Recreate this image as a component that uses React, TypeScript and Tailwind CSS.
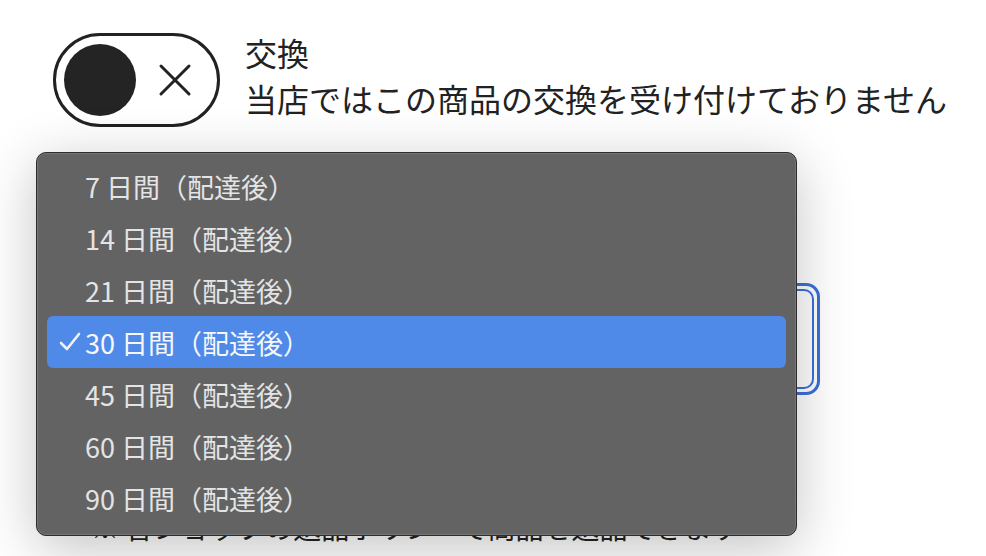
import React from 'react';

const options = [7, 14, 21, 30, 45, 60, 90];
const selected = 30;

function Toggle() {
  return (
    <div className="flex h-[94px] w-[167px] shrink-0 items-center rounded-full border-[3px] border-[#222222] bg-white px-[8px]">
      <div className="h-[72px] w-[72px] rounded-full bg-[#242424]" />
      <svg className="ml-[22px]" width="34" height="34" viewBox="0 0 34 34" fill="none">
        <path d="M3 3 L31 31 M31 3 L3 31" stroke="#222222" strokeWidth="3" strokeLinecap="round" />
      </svg>
    </div>
  );
}

function Check() {
  return (
    <svg width="22" height="20" viewBox="0 0 22 20" fill="none">
      <path d="M2 11 L8 17 L20 2" stroke="#f2f2f2" strokeWidth="2.6" strokeLinecap="round" strokeLinejoin="round" />
    </svg>
  );
}

function Menu() {
  return (
    <div className="absolute left-[36px] top-[152px] w-[761px] rounded-[10px] border border-[#2c2c2c] bg-[#636363] px-[10px] pb-[11px] pt-[7px] shadow-[0_12px_56px_rgba(0,0,0,0.24),inset_0_0_0_1px_rgba(255,255,255,0.12)]">
      {options.map((days) => {
        const active = days === selected;
        return (
          <div
            key={days}
            className={
              active
                ? 'flex h-[52px] items-center rounded-[6px] bg-[#508ae9] text-[#f7f7f7]'
                : 'flex h-[52px] items-center rounded-[6px] text-[#e4e4e4]'
            }
          >
            <div className="flex w-[38px] justify-end pr-[4px]">{active && <Check />}</div>
            <span className="whitespace-nowrap text-[27px] leading-none">
              {days} 日間（配達後）
            </span>
          </div>
        );
      })}
    </div>
  );
}

export default function App() {
  return (
    <div
      className="relative h-[556px] w-[986px] overflow-hidden bg-white text-[#222222]"
      style={{ fontFamily: '"Noto Sans CJK JP", "Noto Sans", sans-serif' }}
    >
      <div className="flex flex-col px-[53px] pt-[33px]">
        <div className="flex items-start gap-[25px]">
          <Toggle />
          <div className="-mt-[4px] flex flex-col whitespace-nowrap text-[32px] leading-[46px]">
            <span>交換</span>
            <span>当店ではこの商品の交換を受け付けておりません</span>
          </div>
        </div>

        <div className="mt-[156px] h-[112px] w-[767px] rounded-[14px] border-[3px] border-[#3a6fdc] p-[3px]">
          <div className="h-full w-full rounded-[10px] border-2 border-[#3a6fdc]" />
        </div>

        <div className="mt-[114px] whitespace-nowrap pl-[38px] text-[28px] leading-[36px]">
          ※ 各ショップの返品ポリシーで商品を返品できます
        </div>
      </div>

      <Menu />
    </div>
  );
}
